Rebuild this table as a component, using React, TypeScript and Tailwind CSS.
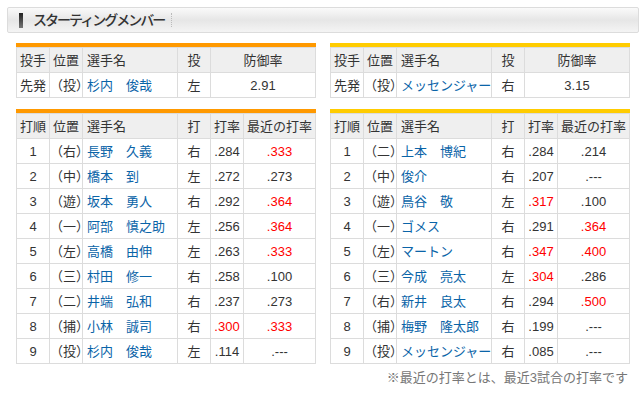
const pitchers = {
  left: { role: '先発', pos: '（投）', name: '杉内　俊哉', hand: '左', era: '2.91' },
  right: { role: '先発', pos: '（投）', name: 'メッセンジャー', hand: '右', era: '3.15' },
};

type Batter = { no: number; pos: string; name: string; hand: string; avg: string; recent: string; avgHot?: boolean; recentHot?: boolean };

const giants: Batter[] = [
  { no: 1, pos: '（右）', name: '長野　久義', hand: '右', avg: '.284', recent: '.333', recentHot: true },
  { no: 2, pos: '（中）', name: '橋本　到', hand: '左', avg: '.272', recent: '.273' },
  { no: 3, pos: '（遊）', name: '坂本　勇人', hand: '右', avg: '.292', recent: '.364', recentHot: true },
  { no: 4, pos: '（一）', name: '阿部　慎之助', hand: '左', avg: '.256', recent: '.364', recentHot: true },
  { no: 5, pos: '（左）', name: '高橋　由伸', hand: '左', avg: '.263', recent: '.333', recentHot: true },
  { no: 6, pos: '（三）', name: '村田　修一', hand: '右', avg: '.258', recent: '.100' },
  { no: 7, pos: '（二）', name: '井端　弘和', hand: '右', avg: '.237', recent: '.273' },
  { no: 8, pos: '（捕）', name: '小林　誠司', hand: '右', avg: '.300', recent: '.333', avgHot: true, recentHot: true },
  { no: 9, pos: '（投）', name: '杉内　俊哉', hand: '左', avg: '.114', recent: '.---' },
];

const tigers: Batter[] = [
  { no: 1, pos: '（二）', name: '上本　博紀', hand: '右', avg: '.284', recent: '.214' },
  { no: 2, pos: '（中）', name: '俊介', hand: '右', avg: '.207', recent: '.---' },
  { no: 3, pos: '（遊）', name: '鳥谷　敬', hand: '左', avg: '.317', recent: '.100', avgHot: true },
  { no: 4, pos: '（一）', name: 'ゴメス', hand: '右', avg: '.291', recent: '.364', recentHot: true },
  { no: 5, pos: '（左）', name: 'マートン', hand: '右', avg: '.347', recent: '.400', avgHot: true, recentHot: true },
  { no: 6, pos: '（三）', name: '今成　亮太', hand: '左', avg: '.304', recent: '.286', avgHot: true },
  { no: 7, pos: '（右）', name: '新井　良太', hand: '右', avg: '.294', recent: '.500', recentHot: true },
  { no: 8, pos: '（捕）', name: '梅野　隆太郎', hand: '右', avg: '.199', recent: '.---' },
  { no: 9, pos: '（投）', name: 'メッセンジャー', hand: '右', avg: '.085', recent: '.---' },
];

const th = 'border border-[#dcdcdc] bg-[#efefef] font-normal h-[25px] p-0';
const td = 'border border-[#dcdcdc] bg-white h-[25px] p-0';

function PitcherTable({ p, bar }: { p: typeof pitchers.left; bar: string }) {
  return (
    <div className="w-[300px]">
      <div className={`h-[4px] ${bar}`} />
      <table className="w-[300px] table-fixed border-collapse">
        <colgroup>
          <col className="w-[33px]" />
          <col className="w-[33px]" />
          <col className="w-[95px]" />
          <col className="w-[33px]" />
          <col />
        </colgroup>
        <thead>
          <tr>
            <th className={th}>投手</th>
            <th className={th}>位置</th>
            <th className={`${th} text-left pl-[4px]`}>選手名</th>
            <th className={th}>投</th>
            <th className={th}>防御率</th>
          </tr>
        </thead>
        <tbody>
          <tr>
            <td className={`${td} text-center`}>{p.role}</td>
            <td className={`${td} text-left`}>{p.pos}</td>
            <td className={`${td} pl-[4px] text-[#0a64a8] whitespace-pre`}>{p.name}</td>
            <td className={`${td} text-center`}>{p.hand}</td>
            <td className={`${td} text-center`}>{p.era}</td>
          </tr>
        </tbody>
      </table>
    </div>
  );
}

function LineupTable({ rows, bar }: { rows: Batter[]; bar: string }) {
  return (
    <div className="w-[300px]">
      <div className={`h-[4px] ${bar}`} />
      <table className="w-[300px] table-fixed border-collapse">
        <colgroup>
          <col className="w-[33px]" />
          <col className="w-[33px]" />
          <col className="w-[95px]" />
          <col className="w-[33px]" />
          <col className="w-[33px]" />
          <col />
        </colgroup>
        <thead>
          <tr>
            <th className={th}>打順</th>
            <th className={th}>位置</th>
            <th className={`${th} text-left pl-[4px]`}>選手名</th>
            <th className={th}>打</th>
            <th className={th}>打率</th>
            <th className={th}>最近の打率</th>
          </tr>
        </thead>
        <tbody>
          {rows.map((r) => (
            <tr key={r.no}>
              <td className={`${td} text-center`}>{r.no}</td>
              <td className={`${td} text-left`}>{r.pos}</td>
              <td className={`${td} pl-[4px] text-[#0a64a8] whitespace-pre`}>{r.name}</td>
              <td className={`${td} text-center`}>{r.hand}</td>
              <td className={`${td} text-center ${r.avgHot ? 'text-[#ff0000]' : ''}`}>{r.avg}</td>
              <td className={`${td} text-center ${r.recentHot ? 'text-[#ff0000]' : ''}`}>{r.recent}</td>
            </tr>
          ))}
        </tbody>
      </table>
    </div>
  );
}

export default function App() {
  return (
    <div className="w-[643px] h-[398px] bg-white text-[#333] text-[13px] leading-none font-['Liberation_Sans','Noto_Sans_CJK_JP',sans-serif] pt-[7px]">
      <div className="ml-[7px] w-[632px] h-[26px] border border-[#dcdcdc] rounded-[2px] bg-gradient-to-b from-[#fafafa] via-[#e6e6e6] to-[#f4f4f4] flex items-center pl-[11px]">
        <div className="w-[4px] h-[15px] bg-gradient-to-b from-[#222] to-[#777]" />
        <span className="ml-[10px] text-[14px] font-medium text-[#333] tracking-[-2px]">スターティングメンバー</span>
        <span className="ml-[7px] h-[14px] border-l border-dotted border-[#bbb]" />
      </div>

      <div className="mt-[10px] ml-[16px] flex gap-[14px]">
        <div className="flex flex-col gap-[11px]">
          <PitcherTable p={pitchers.left} bar="bg-[#ff9900]" />
          <LineupTable rows={giants} bar="bg-[#ff9900]" />
        </div>
        <div className="flex flex-col gap-[11px]">
          <PitcherTable p={pitchers.right} bar="bg-[#ffcc00]" />
          <LineupTable rows={tigers} bar="bg-[#ffcc00]" />
        </div>
      </div>

      <p className="mt-[7px] w-[628px] text-right text-[#777]">※最近の打率とは、最近3試合の打率です</p>
    </div>
  );
}
